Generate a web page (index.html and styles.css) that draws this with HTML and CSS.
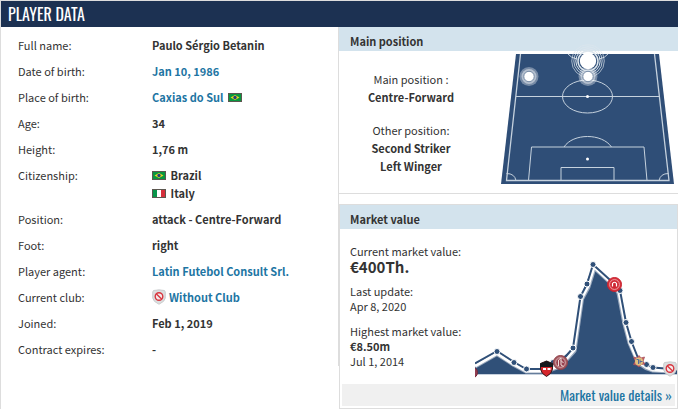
FILE: index.html
```html
<!DOCTYPE html>
<html lang="en">
<head>
  <meta charset="UTF-8">
  <meta name="viewport" content="width=device-width, initial-scale=1.0">
  <title>Player data</title>
  <link rel="stylesheet" href="styles.css">
</head>
<body>
  <!-- shared icons -->
  <svg class="sprite" aria-hidden="true">
    <symbol id="flag-br" viewBox="0 0 14 9">
      <rect width="14" height="9" fill="#5c5750"/>
      <rect x="1" y="1" width="12" height="7" fill="#089740"/>
      <path d="M7 2l4.500 2.500L7 7 2.500 4.500z" fill="#e8d821"/>
      <circle cx="7" cy="4.500" r="1.700" fill="#233f80"/>
    </symbol>
    <symbol id="flag-it" viewBox="0 0 14 9">
      <rect width="14" height="9" fill="#5c5750"/>
      <rect x="1" y="1" width="4" height="7" fill="#07954a"/>
      <rect x="5" y="1" width="4" height="7" fill="#fff"/>
      <rect x="9" y="1" width="4" height="7" fill="#d6303c"/>
    </symbol>
    <symbol id="no-club" viewBox="0 0 14 16">
      <path d="M1.500 1.500Q7 .2 12.500 1.500L13.300 3V9Q13 12.500 7 15.300 1 12.500.7 9V3z" fill="#dcdedf" stroke="#c3c5c7" stroke-width=".8"/>
      <circle cx="7" cy="7.500" r="3.800" fill="#f3e9ea" stroke="#d8363f" stroke-width="1.400"/>
      <path d="M4.400 5l5.200 5" stroke="#d8363f" stroke-width="1.400"/>
    </symbol>
  </svg>

  <main class="box">
    <h1 class="box-header">PLAYER DATA</h1>
    <div class="box-body">
      <section class="player">
        <table class="player-table">
          <tr><th scope="row">Full name:</th><td>Paulo Sérgio Betanin</td></tr>
          <tr><th scope="row">Date of birth:</th><td><a href="#">Jan 10, 1986</a></td></tr>
          <tr>
            <th scope="row">Place of birth:</th>
            <td><a href="#">Caxias do Sul</a> <svg class="flag flag-after"><use href="#flag-br"/></svg></td>
          </tr>
          <tr><th scope="row">Age:</th><td>34</td></tr>
          <tr><th scope="row">Height:</th><td>1,76 m</td></tr>
          <tr>
            <th scope="row">Citizenship:</th>
            <td>
              <svg class="flag"><use href="#flag-br"/></svg> Brazil<br>
              <svg class="flag"><use href="#flag-it"/></svg> Italy
            </td>
          </tr>
          <tr><th scope="row">Position:</th><td>attack - Centre-Forward</td></tr>
          <tr><th scope="row">Foot:</th><td>right</td></tr>
          <tr><th scope="row">Player agent:</th><td><a href="#">Latin Futebol Consult Srl.</a></td></tr>
          <tr>
            <th scope="row">Current club:</th>
            <td><a href="#" class="club"><svg class="crest"><use href="#no-club"/></svg>Without Club</a></td>
          </tr>
          <tr><th scope="row">Joined:</th><td>Feb 1, 2019</td></tr>
          <tr><th scope="row">Contract expires:</th><td>-</td></tr>
        </table>
      </section>

      <div class="side">
        <section class="position">
          <h2 class="sub-header">Main position</h2>
          <div class="position-body">
            <div class="position-text">
              <p>Main position :<br><strong>Centre-Forward</strong></p>
              <p>Other position:<br><strong>Second Striker</strong><br><strong>Left Winger</strong></p>
            </div>
            <svg class="pitch" viewBox="0 0 176 134" role="img" aria-label="Positions on the pitch">
              <path d="M16 3H159L174 133H1z" fill="#2f4e77"/>
              <g fill="none" stroke="#c6d2de" stroke-width="1">
                <path d="M20.500 3L6.500 129.500H169L154.500 3" stroke-width="1.300"/>
                <path d="M16 45.500H159"/>
                <ellipse cx="87.500" cy="45.500" rx="25" ry="16.500"/>
                <path d="M28.500 129.500L31.500 96H144L147 129.500"/>
                <path d="M61 129.500V116.500H114V129.500"/>
                <path d="M64 96C73 82 102 82 111.500 96"/>
                <path d="M6.500 122.500Q14.500 122.500 16 129.500M168.500 122.500Q160.500 122.500 159 129.500"/>
                <path d="M68 3Q71 7 77 8M108 3Q105 7 99 8"/>
              </g>
              <g fill="#fff">
                <circle cx="87.500" cy="45.500" r="1.500"/>
                <circle cx="87.500" cy="108" r="1.500"/>
              </g>
              <g fill="#fff">
                <circle cx="29" cy="25.500" r="9.500" opacity=".35"/>
                <circle cx="29" cy="25.500" r="7.500" opacity=".45"/>
                <circle cx="29" cy="25.500" r="5.200" stroke="#5c7594" stroke-width=".8"/>
                <circle cx="88" cy="25.500" r="9.500" opacity=".35"/>
                <circle cx="88" cy="25.500" r="7.500" opacity=".45"/>
              </g>
              <g fill="none" stroke="#dde6ed">
                <circle cx="88" cy="10" r="16.300" stroke-width=".9" opacity=".75"/>
                <circle cx="88" cy="10" r="14.200" stroke-width=".9" opacity=".85"/>
                <circle cx="88" cy="10" r="12.200" stroke-width="1"/>
                <circle cx="88" cy="10" r="10" stroke-width="1.500"/>
              </g>
              <circle cx="88" cy="10" r="8.200" fill="#fff"/>
              <circle cx="88" cy="25.500" r="5.200" fill="#fff" stroke="#5c7594" stroke-width=".8"/>
            </svg>
          </div>
        </section>

        <section class="market">
          <h2 class="sub-header">Market value</h2>
          <div class="market-body">
            <div class="market-text">
              <p>Current market value: <strong class="amount">€400Th.</strong></p>
              <p>Last update:<br>Apr 8, 2020</p>
              <p>Highest market value:<br><strong>€8.50m</strong><br>Jul 1, 2014</p>
            </div>
            <svg class="chart" viewBox="0 0 202 125" role="img" aria-label="Market value history">
              <path d="M0 109L22 97 39 108 51 115 71 115 98 94 105 43 118 11 145 36 156 88 164 107 178 114 202 115V119H0z" fill="#305078"/>
              <path d="M0 119.500H202" stroke="#c6d0dd"/>
              <g fill="none" stroke-linejoin="round">
                <path d="M0 111.500L22 99 39 110 51 116.500H71L86 111 99.500 96 107 44 113.500 32 119.500 13 139 31 143.500 38 149.500 69 154.500 88 163 107.500 171 113 178 115.500 196 116.500" stroke="#9aa9bd" stroke-width="4"/>
                <path d="M0 111L22 98.500 39 109.500 51 116H71L86 110 99 95 106.500 43.500 113 31 119 12 139 30.500 144 37 150 68.500 155 88 163 107 171 112 178 115 196 116" stroke="#fff" stroke-width="3"/>
                <path d="M0 108.500L22 96 39 107 51 114H71L78 107.500 86 107 98 93 105.500 41.500 112 29 118 9.500 139.500 29 145 35.500 151 67.500 156.500 86.500 164 105.500 171.500 109.500 178 112.500 196 114" stroke="#305078" stroke-width="2"/>
              </g>
              <g fill="#305078" stroke="#fff" stroke-width="1">
                <circle cx="22" cy="96.500" r="3"/>
                <circle cx="39" cy="107.500" r="3"/>
                <circle cx="51.500" cy="114" r="3"/>
                <circle cx="78" cy="107.500" r="3"/>
                <circle cx="98" cy="93" r="3"/>
                <circle cx="105.500" cy="41.500" r="3"/>
                <circle cx="112" cy="29" r="3"/>
                <circle cx="118" cy="9.500" r="3"/>
                <circle cx="145" cy="35.500" r="3"/>
                <circle cx="151" cy="67.500" r="3"/>
                <circle cx="156.500" cy="86.500" r="3"/>
                <circle cx="171.500" cy="109.500" r="3"/>
                <circle cx="178" cy="112.500" r="3"/>
              </g>
              <!-- club crests along the line -->
              <circle cx="-3" cy="117.500" r="5.500" fill="#943f52" stroke="#762c3c"/>
              <g>
                <path d="M65.500 108.500L71.500 106 77.500 108.500V114Q77 118.500 71.500 121.500 66 118.500 65.500 114z" fill="#d5262c" stroke="#33191c"/>
                <path d="M65 108.500L68 107.500 71.500 106 75 107.500 78 108.500V112H65z" fill="#16191d"/>
                <path d="M68 114H71M72.500 114H75.500" stroke="#fff" stroke-width="2"/>
              </g>
              <g>
                <circle cx="85.500" cy="107.500" r="7" fill="#a75b62" stroke="#8e4049"/>
                <circle cx="85.500" cy="107.500" r="4.800" fill="#97404f" stroke="#e0c3c1" stroke-width=".8"/>
                <path d="M83.500 111V105L86 103V110L88.500 111.500M86 105.500L88.500 108" fill="none" stroke="#eedfdc" stroke-width="1"/>
              </g>
              <g>
                <circle cx="139.500" cy="29.500" r="7" fill="#d8323c" stroke="#c8212e"/>
                <circle cx="139.500" cy="29.500" r="4.900" fill="#cf2733" stroke="#f1adb0" stroke-width=".9"/>
                <path d="M137.500 31.500V28.500Q139.500 26 141.500 28.500V31.500" fill="none" stroke="#fff" stroke-width="1.200"/>
              </g>
              <g>
                <path d="M158.500 102L162 103 164 100.500 166 103 169.500 102 168 106.500 170 109 166 109.500 164 112 161.500 110 158.500 109.500 160.500 106z" fill="#c96060" stroke="#a8525d" stroke-width=".8"/>
                <circle cx="164" cy="106.500" r="4" fill="#e0c17e"/>
                <path d="M161.500 104.500H163.500V109M165 104.500V108.500M165 106.500H167.500" stroke="#53699a" stroke-width="1" fill="none"/>
              </g>
              <use href="#no-club" x="188" y="106" width="14" height="16"/>
            </svg>
          </div>
          <div class="market-footer"><a href="#">Market value details »</a></div>
        </section>
      </div>
    </div>
  </main>
</body>
</html>
```

FILE: styles.css
```css
* {
  box-sizing: border-box;
}

body {
  margin: 0;
  background: #fff;
  color: #333;
  font-family: "Source Sans Pro", "Noto Sans CJK SC", sans-serif;
  font-size: 11px;
  line-height: 18px;
}

h1, h2, p {
  margin: 0;
}

a {
  color: #1d75a3;
  text-decoration: none;
}

a:hover {
  text-decoration: underline;
}

.sprite {
  display: none;
}

.box {
  border-top: 1px solid #ddd;
  border-left: 1px solid #ddd;
}

.box-header {
  padding: 0 7px;
  background: #1c3152;
  color: #fff;
  font-family: Oswald, "Liberation Sans Narrow", "Noto Sans CJK SC", sans-serif;
  font-size: 16px;
  font-weight: normal;
  line-height: 26px;
}

.box-body {
  display: grid;
  grid-template-columns: 338fr 339fr;
}

/* Player facts */
.player {
  align-self: start;
  padding: 5px 16px 4px 17px;
  border-right: 1px solid #ddd;
}

.player-table {
  width: 100%;
  border-collapse: collapse;
}

.player-table th {
  width: 134px;
  padding: 4px 0;
  font-weight: normal;
  text-align: left;
  vertical-align: top;
}

.player-table td {
  padding: 4px 0;
  font-weight: bold;
}

.flag {
  width: 14px;
  height: 9px;
  margin-right: 2px;
}

.flag-after {
  margin-left: 2px;
}

.club {
  display: flex;
  align-items: center;
  gap: 3px;
}

.crest {
  width: 14px;
  height: 16px;
}

/* Right column */
.side {
  min-width: 0;
}

.sub-header {
  padding: 5px 11px 1px;
  background: #d3e3ed;
  font-size: 11px;
  line-height: 18px;
}

.position {
  border-bottom: 1px solid #ddd;
}

.position-body {
  display: flex;
  justify-content: space-between;
  padding: 0 2px 8px 19px;
}

.position-text {
  flex: 1;
  max-width: 106px;
  padding-top: 19px;
  text-align: center;
  white-space: nowrap;
}

.position-text p + p {
  margin-top: 15px;
}

.pitch {
  flex: none;
  width: 176px;
  height: 134px;
  overflow: visible;
}

.market {
  margin-top: 10px;
  border: 1px solid #ddd;
}

.market .sub-header {
  padding-left: 10px;
}

.market-body {
  display: flex;
  justify-content: space-between;
  padding-left: 10px;
}

.market-text {
  padding-top: 15px;
  line-height: 15px;
  white-space: nowrap;
}

.market-text p {
  margin-bottom: 10px;
}

.amount {
  display: block;
  font-size: 15px;
}

.chart {
  flex: none;
  width: 202px;
  height: 125px;
  margin-top: 26px;
}

.market-footer {
  margin: 4px 2px 2px;
  padding: 0 3px;
  background: #f0f0f0;
  font-family: Oswald, "Liberation Sans Narrow", "Noto Sans CJK SC", sans-serif;
  font-size: 14px;
  line-height: 22px;
  text-align: right;
}
```
